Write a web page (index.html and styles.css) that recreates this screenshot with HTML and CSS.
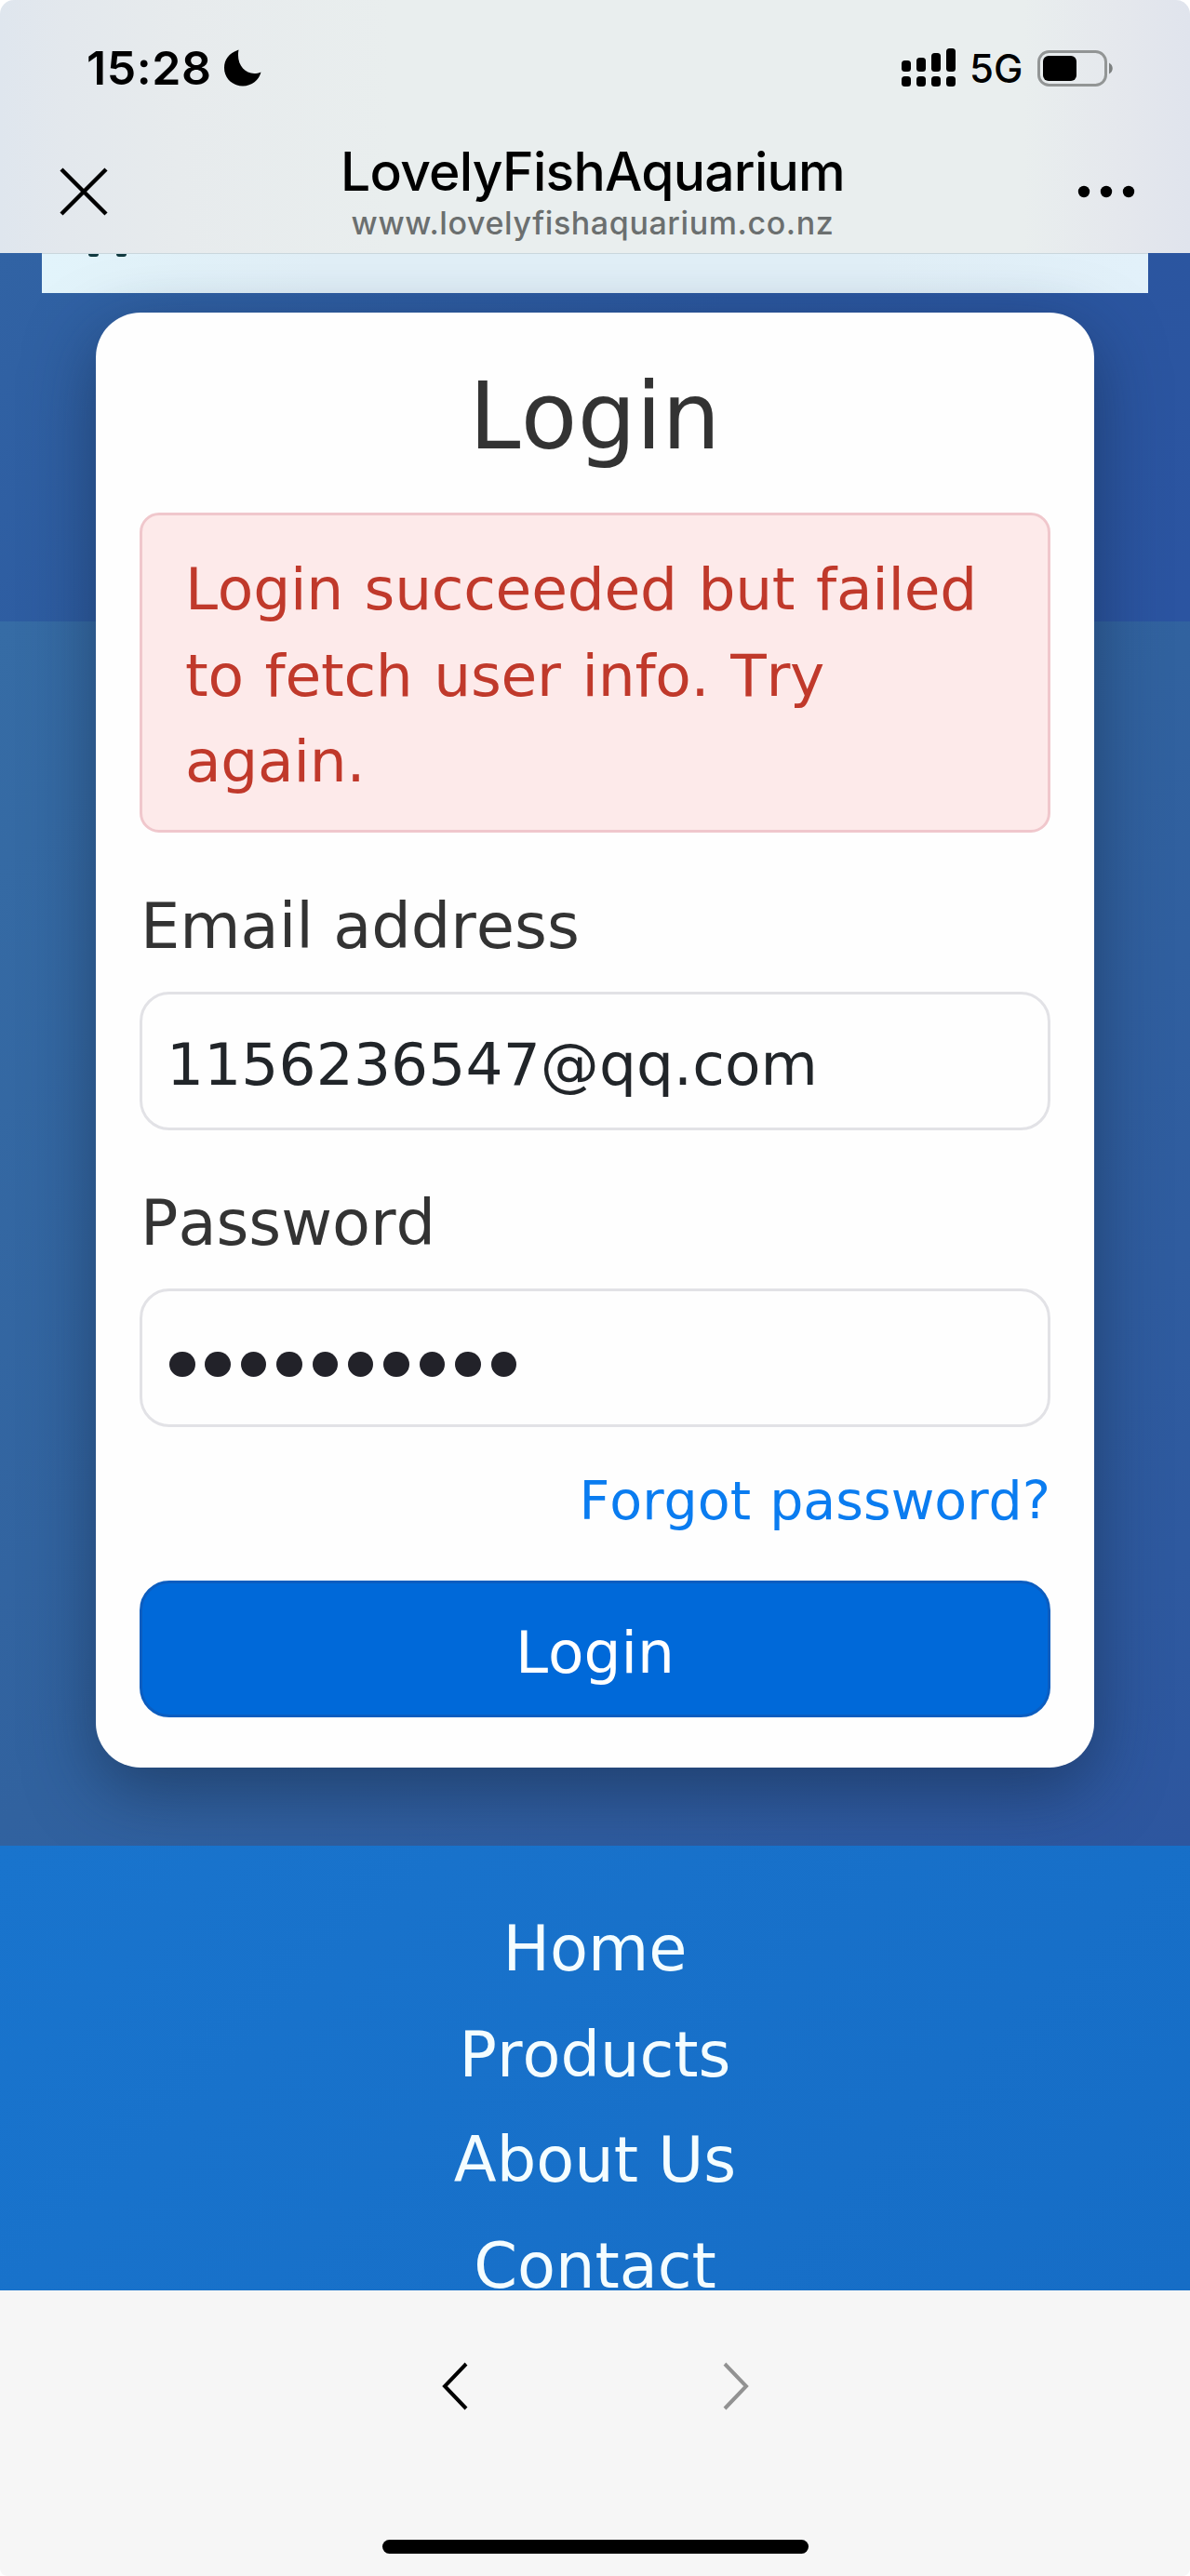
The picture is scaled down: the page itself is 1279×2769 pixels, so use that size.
FILE: index.html
```html
<!DOCTYPE html>
<html lang="en">
<head>
<meta charset="utf-8">
<title>LovelyFishAquarium</title>
<link rel="stylesheet" href="styles.css">
</head>
<body>
<div class="screen">
  <header class="chrome">
    <div class="status">
      <div class="status-left">
        <span class="time">15:28</span>
        <svg class="moon" viewBox="0 0 40 40" width="40" height="40"><path d="M15.500 0.500C5 4 0 11 0 20c0 11 9 19.500 20 19.500C29.500 39.500 37.500 33 39.500 24.500C26 30.500 12 19 15.500 0.500Z"/></svg>
      </div>
      <div class="status-right">
        <svg class="signal" viewBox="0 0 59 42" width="59" height="42">
          <rect x="0" y="13" width="10" height="12" rx="3.500"/><rect x="16" y="10" width="10" height="15" rx="3.500"/><rect x="32" y="5" width="10" height="20" rx="3.500"/><rect x="48" y="0" width="10" height="25" rx="3.500"/>
          <rect x="0" y="30" width="10" height="11" rx="3.500"/><rect x="16" y="30" width="10" height="11" rx="3.500"/><rect x="32" y="30" width="10" height="11" rx="3.500"/><rect x="48" y="30" width="10" height="11" rx="3.500"/>
        </svg>
        <span class="network">5G</span>
        <svg class="battery" viewBox="0 0 82 39" width="82" height="39">
          <rect x="1.500" y="1.500" width="72" height="36" rx="11" fill="none" stroke="#929595" stroke-width="3"/>
          <rect x="6" y="6" width="36" height="27" rx="6"/>
          <path d="M77 13.500c5 2.500 5 9.500 0 12z" fill="#7d8080"/>
        </svg>
      </div>
    </div>
    <div class="titlebar">
      <svg class="close" viewBox="0 0 52 52" width="52" height="52"><path d="M2 2L50 50M50 2L2 50" fill="none" stroke="#000" stroke-width="4.400"/></svg>
      <div class="titles">
        <div class="title">LovelyFishAquarium</div>
        <div class="url">www.lovelyfishaquarium.co.nz</div>
      </div>
      <svg class="more" viewBox="0 0 62 14" width="62" height="14"><circle cx="7" cy="7" r="6.200"/><circle cx="31" cy="7" r="6.200"/><circle cx="55" cy="7" r="6.200"/></svg>
    </div>
  </header>

  <main class="page">
    <div class="strip"><span class="wheel"></span><span class="wheel"></span></div>
    <form class="card">
      <h1 class="heading">Login</h1>
      <div class="alert">Login succeeded but failed to fetch user info. Try again.</div>
      <div class="label">Email address</div>
      <div class="field">1156236547@qq.com</div>
      <div class="label">Password</div>
      <div class="field masked"><i></i><i></i><i></i><i></i><i></i><i></i><i></i><i></i><i></i><i></i></div>
      <a class="forgot">Forgot password?</a>
      <div class="submit">Login</div>
    </form>
  </main>

  <footer class="links">
    <a>Home</a>
    <a>Products</a>
    <a>About Us</a>
    <a>Contact</a>
  </footer>

  <nav class="toolbar">
    <div class="arrows">
      <svg viewBox="0 0 28 52" width="28" height="52"><path d="M26 2L3 26L26 50" fill="none" stroke="#000" stroke-width="4"/></svg>
      <svg viewBox="0 0 28 52" width="28" height="52"><path d="M2 2L25 26L2 50" fill="none" stroke="#929292" stroke-width="4"/></svg>
    </div>
    <div class="home-indicator"></div>
  </nav>
</div>
</body>
</html>
```
FILE: styles.css
```css
* { box-sizing: border-box; }
body { margin: 0; background: #fff; }

.screen {
  width: 1279px;
  height: 2769px;
  display: flex;
  flex-direction: column;
  border-radius: 15px 15px 8px 8px;
  overflow: hidden;
  font-family: "DejaVu Sans", Verdana, sans-serif;
  font-kerning: none;
}

/* browser chrome */
.chrome {
  height: 272px;
  background: linear-gradient(90deg, #dfe6ee 0, #e3e8ed 70px, #e7ebed 190px, #e9eeee 420px, #e9eeee 1100px, #e5e8ed 1200px, #e0e4ed 1279px);
  font-family: Inter, "Liberation Sans", sans-serif;
  font-kerning: auto;
  color: #000;
  flex: none;
}
.status {
  height: 146px;
  padding: 0 82px 0 93px;
  display: flex;
  justify-content: space-between;
  align-items: center;
}
.status-left, .status-right { display: flex; align-items: center; }
.time { font-size: 50px; font-weight: 600; line-height: 60px; letter-spacing: .6px; width: 148px; white-space: nowrap; }
.network { font-size: 42px; font-weight: 500; line-height: 50px; width: 73px; margin-left: 14px; margin-top: 2px; white-space: nowrap; }
.titlebar {
  height: 126px;
  padding: 0 59px 0 64px;
  display: flex;
  justify-content: space-between;
  align-items: flex-start;
}
.close { margin-top: 34px; }
.more { margin-top: 53px; }
.titles { text-align: center; padding-top: 4px; }
.title { font-size: 57px; font-weight: 500; line-height: 70px; letter-spacing: -.75px; }
.url { font-size: 34px; font-weight: 500; line-height: 42px; letter-spacing: .6px; color: #6b6f6f; margin-top: -1px; }

/* page body */
.page {
  height: 1712px;
  flex: none;
  padding: 0 45px;
  background:
    linear-gradient(135deg, #3163a4 0, #2b579f 50%, #2b54a1 100%) 0 0 / 100% 396px no-repeat,
    linear-gradient(135deg, #366ca5 0, #31629f 50%, #2d569f 100%) 0 396px / 100% 1316px no-repeat;
}
.strip {
  height: 43px;
  padding-left: 50px;
  display: flex;
  gap: 19px;
  background: linear-gradient(90deg, #e2f4fb, #e1eff7 25%, #e1eff7 75%, #e2f1fa);
  border-top: 1px solid #c9d6dd;
}
.wheel { width: 11px; height: 3px; border-radius: 0 0 5px 5px; background: #10393f; }
.card {
  margin: 21px 58px 0;
  height: 1564px;
  padding: 52px 47px 0;
  display: flex;
  flex-direction: column;
  background: #fefefe;
  border-radius: 48px;
  box-shadow: 0 24px 72px rgba(20, 40, 70, .55);
}
.heading { margin: 0 0 43px; font-size: 99px; line-height: 120px; font-weight: 400; letter-spacing: .3px; text-align: center; color: #333; }
.alert {
  height: 344px;
  padding: 34px 40px 0 46px;
  border: 3px solid #f0c7cc;
  border-radius: 21px;
  background: #fdeaea;
  color: #c0392b;
  font-size: 63px;
  line-height: 92.500px;
  letter-spacing: -.25px;
  word-spacing: 3px;
  margin-bottom: 51px;
}
.label { font-size: 67px; line-height: 100px; color: #333; margin-bottom: 20px; padding-left: 1px; }
.field {
  height: 149px;
  padding: 9px 26px 0;
  border: 3px solid #e2e2e6;
  border-radius: 32px;
  font-size: 63px;
  line-height: 134px;
  letter-spacing: .1px;
  color: #212529;
}
.field + .label { margin-top: 50px; }
.masked { display: flex; align-items: center; gap: 10.900px; padding: 14px 29px 0; }
.masked i { width: 27.500px; height: 27.500px; border-radius: 50%; background: #222229; }
.forgot { margin-top: 39px; font-size: 57px; line-height: 80px; word-spacing: 2px; text-align: right; color: #0a7cf0; }
.submit {
  margin-top: 46px;
  height: 147px;
  padding-top: 4px;
  border: 3px solid #0b5dc0;
  border-radius: 32px;
  background: #0069d9;
  color: #fff;
  font-size: 63px;
  line-height: 141px;
  text-align: center;
}

.links {
  height: 478px;
  flex: none;
  padding-top: 55px;
  display: flex;
  flex-direction: column;
  align-items: center;
  overflow: hidden;
  background: linear-gradient(135deg, #1974cd, #166dc6);
  color: #f4fdff;
  font-size: 67px;
  line-height: 113.700px;
}
.links a { flex: none; }

.toolbar {
  flex: 1;
  background: #f6f6f6;
  display: flex;
  flex-direction: column;
  align-items: center;
  justify-content: space-between;
  padding: 77px 0 24px;
}
.arrows { display: flex; gap: 274px; }
.home-indicator { width: 458px; height: 15px; border-radius: 8px; background: #000; }
```
